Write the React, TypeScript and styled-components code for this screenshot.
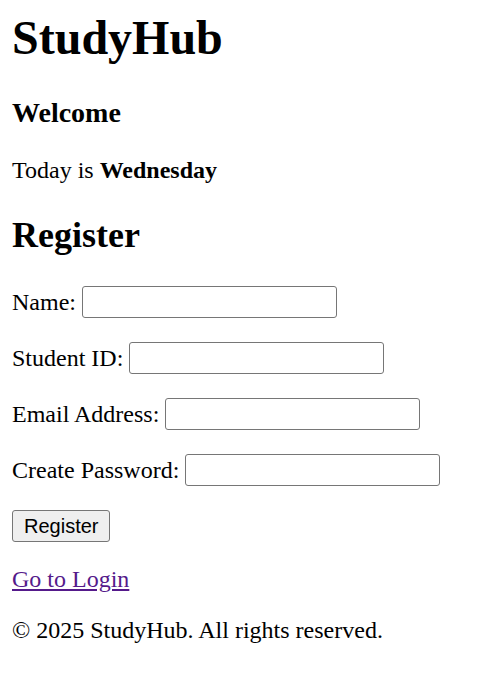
import React from "react";
import styled, { createGlobalStyle } from "styled-components";

const Global = createGlobalStyle`
  html, body { background: #fff; }
  body {
    margin: 0;
    font-family: "Liberation Serif", "Times New Roman", serif;
    font-size: 24px;
    color: #000;
  }
`;

const Page = styled.div`
  padding: 10px 12px 12px;
`;

const Title = styled.h1`
  font-size: 48px;
  font-weight: bold;
  margin: 0 0 32px;
`;

const Welcome = styled.h3`
  font-size: 28px;
  font-weight: bold;
  margin: 28px 0;
`;

const Para = styled.p`
  margin: 24px 0;
`;

const SectionTitle = styled.h2`
  font-size: 36px;
  font-weight: bold;
  margin: 30px 0;
`;

const Form = styled.form`
  margin: 0;
`;

const FieldRow = styled.p`
  margin: 24px 0;
  height: 32px;
  display: flex;
  align-items: center;
  gap: 6px;
  line-height: 32px;
`;

const Input = styled.input`
  box-sizing: border-box;
  width: 255px;
  height: 32px;
  border: 1px solid #767676;
  border-radius: 3px;
  background: #fff;
  padding: 1px 3px;
  font-family: "Liberation Sans", Arial, sans-serif;
  font-size: 20px;
  margin: 0;
`;

const Button = styled.button`
  box-sizing: border-box;
  height: 32px;
  padding: 0 11px;
  border: 1px solid #767676;
  border-radius: 3px;
  background: #efefef;
  color: #000;
  font-family: "Liberation Sans", Arial, sans-serif;
  font-size: 20px;
  margin: 0;
`;

const ButtonRow = styled.div`
  margin: 24px 0;
  height: 32px;
  display: flex;
`;

const LoginLink = styled.a`
  color: #551a8b;
  text-decoration: underline;
`;

const Footer = styled.footer`
  margin: 24px 0;
`;

export default function App() {
  const fields = ["Name:", "Student ID:", "Email Address:", "Create Password:"];
  return (
    <>
      <Global />
      <Page>
        <Title>StudyHub</Title>
        <Welcome>Welcome</Welcome>
        <Para>
          Today is <b>Wednesday</b>
        </Para>
        <SectionTitle>Register</SectionTitle>
        <Form onSubmit={(e) => e.preventDefault()}>
          {fields.map((f) => (
            <FieldRow as="div" key={f}>
              <label>{f}</label>
              <Input type={f === "Create Password:" ? "password" : "text"} />
            </FieldRow>
          ))}
          <ButtonRow>
            <Button type="submit">Register</Button>
          </ButtonRow>
        </Form>
        <Para>
          <LoginLink href="#">Go to Login</LoginLink>
        </Para>
        <Footer>© 2025 StudyHub. All rights reserved.</Footer>
      </Page>
    </>
  );
}
